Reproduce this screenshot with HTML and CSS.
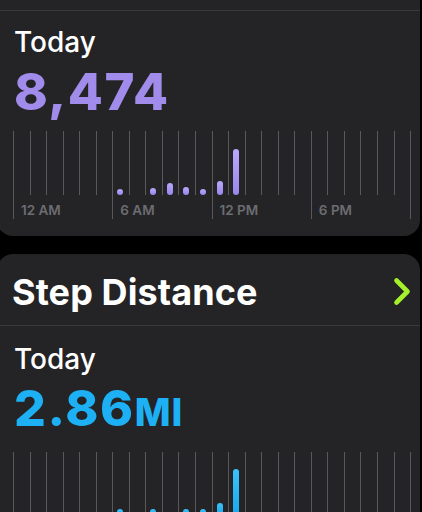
FILE: index.html
```html
<!DOCTYPE html>
<html lang="en">
<head>
<meta charset="utf-8">
<title>Steps</title>
<link rel="stylesheet" href="styles.css">
</head>
<body>
<div class="screen">
  <section class="card card-first">
    <div class="head-stub"></div>
    <div class="card-body body-first">
      <div class="period">Today</div>
      <div class="value value-steps">8,474</div>
      <div class="chart chart-steps">
        <div class="slot major"><div class="bars"></div><div class="tick">12 AM</div></div>
        <div class="slot"><div class="bars"></div><div class="tick"></div></div>
        <div class="slot"><div class="bars"></div><div class="tick"></div></div>
        <div class="slot"><div class="bars"></div><div class="tick"></div></div>
        <div class="slot"><div class="bars"></div><div class="tick"></div></div>
        <div class="slot"><div class="bars"></div><div class="tick"></div></div>
        <div class="slot major"><div class="bars"><span class="bar" style="height:6px"></span></div><div class="tick">6 AM</div></div>
        <div class="slot"><div class="bars"></div><div class="tick"></div></div>
        <div class="slot"><div class="bars"><span class="bar" style="height:7px"></span></div><div class="tick"></div></div>
        <div class="slot"><div class="bars"><span class="bar" style="height:12px"></span></div><div class="tick"></div></div>
        <div class="slot"><div class="bars"><span class="bar" style="height:8px"></span></div><div class="tick"></div></div>
        <div class="slot"><div class="bars"><span class="bar" style="height:6px"></span></div><div class="tick"></div></div>
        <div class="slot major"><div class="bars"><span class="bar" style="height:14px"></span></div><div class="tick">12 PM</div></div>
        <div class="slot"><div class="bars"><span class="bar" style="height:46px"></span></div><div class="tick"></div></div>
        <div class="slot"><div class="bars"></div><div class="tick"></div></div>
        <div class="slot"><div class="bars"></div><div class="tick"></div></div>
        <div class="slot"><div class="bars"></div><div class="tick"></div></div>
        <div class="slot"><div class="bars"></div><div class="tick"></div></div>
        <div class="slot major"><div class="bars"></div><div class="tick">6 PM</div></div>
        <div class="slot"><div class="bars"></div><div class="tick"></div></div>
        <div class="slot"><div class="bars"></div><div class="tick"></div></div>
        <div class="slot"><div class="bars"></div><div class="tick"></div></div>
        <div class="slot"><div class="bars"></div><div class="tick"></div></div>
        <div class="slot"><div class="bars"></div><div class="tick"></div></div>
        <div class="slot major end"><div class="bars"></div><div class="tick"></div></div>
      </div>
    </div>
  </section>

  <section class="card card-second">
    <header class="card-head">
      <h2 class="title">Step Distance</h2>
      <svg class="chevron" width="18" height="29" viewBox="0 0 18 29" aria-hidden="true">
        <path d="M3.5 3.5 L14.5 14.5 L3.5 25.5" fill="none" stroke="#a4f02a" stroke-width="4.6" stroke-linecap="round" stroke-linejoin="round"/>
      </svg>
    </header>
    <div class="card-body">
      <div class="period">Today</div>
      <div class="value value-distance">2.86<span class="unit">MI</span></div>
      <div class="chart chart-distance">
        <div class="slot major"><div class="bars"></div><div class="tick"></div></div>
        <div class="slot"><div class="bars"></div><div class="tick"></div></div>
        <div class="slot"><div class="bars"></div><div class="tick"></div></div>
        <div class="slot"><div class="bars"></div><div class="tick"></div></div>
        <div class="slot"><div class="bars"></div><div class="tick"></div></div>
        <div class="slot"><div class="bars"></div><div class="tick"></div></div>
        <div class="slot major"><div class="bars"><span class="bar" style="height:6px"></span></div><div class="tick"></div></div>
        <div class="slot"><div class="bars"></div><div class="tick"></div></div>
        <div class="slot"><div class="bars"><span class="bar" style="height:6px"></span></div><div class="tick"></div></div>
        <div class="slot"><div class="bars"></div><div class="tick"></div></div>
        <div class="slot"><div class="bars"><span class="bar" style="height:6px"></span></div><div class="tick"></div></div>
        <div class="slot"><div class="bars"><span class="bar" style="height:6px"></span></div><div class="tick"></div></div>
        <div class="slot major"><div class="bars"><span class="bar" style="height:12px"></span></div><div class="tick"></div></div>
        <div class="slot"><div class="bars"><span class="bar" style="height:46px"></span></div><div class="tick"></div></div>
        <div class="slot"><div class="bars"></div><div class="tick"></div></div>
        <div class="slot"><div class="bars"></div><div class="tick"></div></div>
        <div class="slot"><div class="bars"></div><div class="tick"></div></div>
        <div class="slot"><div class="bars"></div><div class="tick"></div></div>
        <div class="slot major"><div class="bars"></div><div class="tick"></div></div>
        <div class="slot"><div class="bars"></div><div class="tick"></div></div>
        <div class="slot"><div class="bars"></div><div class="tick"></div></div>
        <div class="slot"><div class="bars"></div><div class="tick"></div></div>
        <div class="slot"><div class="bars"></div><div class="tick"></div></div>
        <div class="slot"><div class="bars"></div><div class="tick"></div></div>
        <div class="slot major end"><div class="bars"></div><div class="tick"></div></div>
      </div>
    </div>
  </section>
</div>
</body>
</html>
```

FILE: styles.css
```css
html, body {
  margin: 0;
  padding: 0;
  background: #000;
}

body {
  width: 422px;
  height: 512px;
  overflow: hidden;
  font-family: Inter, "Noto Sans", "Liberation Sans", sans-serif;
  color: #fff;
}

.screen {
  display: flex;
  flex-direction: column;
  gap: 18px;
}

.card {
  background: #242426;
  margin-left: -3px;
  width: 423px;
}

.card-first {
  border-radius: 0 0 16px 16px;
}

.card-second {
  border-radius: 16px 16px 0 0;
}

.head-stub {
  height: 10px;
  border-bottom: 1px solid #3a3a3c;
}

.card-head {
  display: flex;
  align-items: center;
  justify-content: space-between;
  padding: 15.5px 9px 11.5px 15px;
  border-bottom: 1px solid #3a3a3c;
}

.title {
  margin: 0;
  font-size: 36px;
  line-height: 44px;
  font-weight: 700;
  letter-spacing: 0.1px;
  color: #fff;
}

.chevron {
  display: block;
  flex: none;
}

.card-body {
  padding: 14px 0 0 17px;
}

.card-second .card-body {
  padding-top: 15.5px;
}

.body-first {
  padding-bottom: 17.5px;
}

.period {
  font-size: 28px;
  line-height: 34px;
  font-weight: 500;
  color: #fff;
}

.value {
  margin-top: 4.5px;
  font-size: 51px;
  line-height: 56px;
  font-weight: 800;
}

.value-steps {
  color: #a28ceb;
  letter-spacing: 1.5px;
}

.value-distance {
  color: #1db0f4;
  font-size: 50px;
  letter-spacing: 1.6px;
}

.unit {
  font-size: 38px;
  letter-spacing: 1px;
}

.chart {
  display: flex;
  margin: 11.5px 0 0 -1px;
}

.slot {
  flex: none;
  width: 16.56px;
  display: flex;
  flex-direction: column;
}

.slot.end {
  width: 2px;
}

.bars {
  box-sizing: border-box;
  height: 63.5px;
  border-left: 1.5px solid #59595d;
  display: flex;
  align-items: flex-end;
  justify-content: center;
  padding-right: 1.5px;
}

.tick {
  box-sizing: border-box;
  height: 24px;
}

.major .tick {
  border-left: 1.5px solid #59595d;
  padding: 7px 0 0 7px;
  font-size: 13.5px;
  line-height: 16px;
  font-weight: 600;
  color: #6c6c71;
  white-space: nowrap;
}

.bar {
  display: block;
  width: 6px;
  border-radius: 3px;
}

.chart-steps .bar {
  background: linear-gradient(#baa8fb, #9b85ec);
}

.chart-distance .bar {
  background: linear-gradient(#3cc2fb, #18a8f0);
}
```
